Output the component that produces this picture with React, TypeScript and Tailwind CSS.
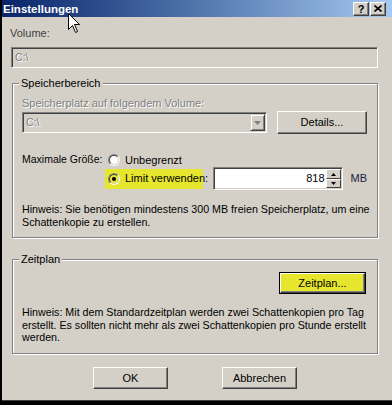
import React from "react";

const F = { fontFamily: '"Liberation Sans", Arial, sans-serif' };

function Btn({ children, w, h = 22, def = false, hl = false }: { children: React.ReactNode; w: number; h?: number; def?: boolean; hl?: boolean }) {
  const inner = (
    <div
      className={`flex items-center justify-center border border-t-white border-l-white border-r-[#404040] border-b-[#404040] shadow-[inset_-1px_-1px_0_#808080] text-[11px] text-black whitespace-nowrap ${hl ? "bg-[#e6e62e]" : "bg-[#d4d0c8]"}`}
      style={{ width: def ? w - 2 : w, height: def ? h - 2 : h }}
    >
      {children}
    </div>
  );
  if (def) return <div className="border border-black">{inner}</div>;
  return inner;
}

function Sunken({ className = "", children }: { className?: string; children?: React.ReactNode }) {
  return (
    <div className={`border border-t-[#808080] border-l-[#808080] border-b-white border-r-white shadow-[inset_1px_1px_0_#404040,inset_-1px_-1px_0_#d4d0c8] ${className}`}>
      {children}
    </div>
  );
}

function Group({ label, className = "", children }: { label: string; className?: string; children: React.ReactNode }) {
  return (
    <div className={`relative border border-[#808080] shadow-[inset_1px_1px_0_#fff,1px_1px_0_#fff] ${className}`}>
      <span className="absolute left-[6px] -top-[8px] px-[2px] bg-[#d4d0c8] leading-[14px] text-[11px] text-black">{label}</span>
      {children}
    </div>
  );
}

function Radio({ checked, fill = "#ffffff" }: { checked?: boolean; fill?: string }) {
  return (
    <div className="w-[12px] h-[12px] rounded-full border border-t-[#808080] border-l-[#808080] border-b-white border-r-white flex items-center justify-center shrink-0">
      <div
        className="w-[10px] h-[10px] rounded-full border border-t-[#404040] border-l-[#404040] border-b-[#d4d0c8] border-r-[#d4d0c8] flex items-center justify-center"
        style={{ background: fill }}
      >
        {checked && <div className="w-[4px] h-[4px] rounded-full bg-black" />}
      </div>
    </div>
  );
}

const disabledText = "text-[#808080] [text-shadow:1px_1px_0_#fff]";

export default function App() {
  return (
    <div className="w-[392px] h-[405px] bg-black overflow-hidden relative" style={F}>
      <div className="ml-[2px] w-[390px] h-[401px] bg-[#d4d0c8] border-b border-[#404040] flex flex-col">
        {/* Title bar */}
        <div className="h-[17px] bg-gradient-to-r from-[#0a246a] to-[#a6caf0] flex items-center justify-between pl-[1px] pr-[6px]">
          <span className="text-white font-bold text-[11.5px] leading-[14px]">Einstellungen</span>
          <div className="flex gap-[1px]">
            <div className="w-[16px] h-[14px] bg-[#d4d0c8] border border-t-white border-l-white border-r-[#404040] border-b-[#404040] shadow-[inset_-1px_-1px_0_#808080] flex items-center justify-center">
              <span className="font-bold text-[11px] leading-[10px] text-black">?</span>
            </div>
            <div className="w-[16px] h-[14px] bg-[#d4d0c8] border border-t-white border-l-white border-r-[#404040] border-b-[#404040] shadow-[inset_-1px_-1px_0_#808080] flex items-center justify-center">
              <svg width="8" height="7" viewBox="0 0 8 7">
                <path d="M0.5 0.5 L7.5 6.5 M7.5 0.5 L0.5 6.5" stroke="#000" strokeWidth="1.6" />
              </svg>
            </div>
          </div>
        </div>

        {/* Body */}
        <div className="flex flex-col pl-[9px] pr-[14px] text-[10.5px] text-black whitespace-nowrap">
          <div className="mt-[9px] leading-[14px] -ml-[1px] text-[#404040] text-[11px]">Volume:</div>
          <Sunken className="mt-[7px] h-[21px] w-[367px] bg-[#d4d0c8] flex items-center pl-[3px]">
            <span className={disabledText}>C:\</span>
          </Sunken>

          <Group label="Speicherbereich" className="mt-[15px] ml-[1px] h-[155px] pl-[9px] pr-[10px] pt-[12px]">
            <div className={`leading-[14px] text-[11px] ${disabledText}`}>Speicherplatz auf folgendem Volume:</div>
            <div className="mt-[1px] flex items-center">
              <Sunken className="h-[21px] w-[247px] bg-[#d4d0c8] flex items-center justify-between pl-[3px] pr-[1px]">
                <span className={disabledText}>C:\</span>
                <div className="w-[15px] h-[17px] bg-[#d4d0c8] border border-t-[#d4d0c8] border-l-[#d4d0c8] border-r-[#404040] border-b-[#404040] shadow-[inset_1px_1px_0_#fff,inset_-1px_-1px_0_#808080] flex items-center justify-center">
                  <svg width="7" height="4" viewBox="0 0 7 4"><path d="M0 0 H7 L3.5 4 Z" fill="#808080" /></svg>
                </div>
              </Sunken>
              <div className="ml-[10px]"><Btn w={90} h={23}>Details...</Btn></div>
            </div>

            <div className="mt-[19px] flex items-center h-[14px]">
              <span className="w-[86px] shrink-0">Maximale Größe:</span>
              <Radio />
              <span className="ml-[5px] text-[11px]">Unbegrenzt</span>
            </div>
            <div className="flex items-center h-[23px]">
              <div className="ml-[83px] w-[98px] h-[20px] bg-[#e6e62e] flex items-center pl-[3px]">
                <Radio checked fill="#e6e62e" />
                <span className="ml-[5px] text-[11px]">Limit verwenden:</span>
              </div>
              <Sunken className="ml-[10px] w-[132px] h-[23px] bg-white flex items-center justify-end pr-[1px]">
                <span className="mr-[1px] text-[11px]">818</span>
                <div className="flex flex-col w-[15px] h-[19px]">
                  <div className="h-[10px] bg-[#d4d0c8] border border-t-white border-l-white border-r-[#404040] border-b-[#404040] flex items-center justify-center">
                    <svg width="5" height="3" viewBox="0 0 5 3"><path d="M2.5 0 L5 3 H0 Z" fill="#000" /></svg>
                  </div>
                  <div className="h-[9px] bg-[#d4d0c8] border border-t-white border-l-white border-r-[#404040] border-b-[#404040] flex items-center justify-center">
                    <svg width="5" height="3" viewBox="0 0 5 3"><path d="M0 0 H5 L2.5 3 Z" fill="#000" /></svg>
                  </div>
                </div>
              </Sunken>
              <span className="ml-[8px] text-[#202040] text-[11px]">MB</span>
            </div>

            <div className="mt-[13px] leading-[13px] text-[10.7px]">
              Hinweis: Sie benötigen mindestens 300 MB freien Speicherplatz, um eine
              <br />
              Schattenkopie zu erstellen.
            </div>
          </Group>

          <Group label="Zeitplan" className="mt-[21px] ml-[1px] h-[95px] pl-[9px] pr-[11px] pt-[12px]">
            <div className="flex justify-end">
              <Btn w={87} h={22} def hl>Zeitplan...</Btn>
            </div>
            <div className="mt-[12px] leading-[12.5px] text-[10.7px]">
              Hinweis: Mit dem Standardzeitplan werden zwei Schattenkopien pro Tag
              <br />
              erstellt. Es sollten nicht mehr als zwei Schattenkopien pro Stunde erstellt
              <br />
              werden.
            </div>
          </Group>
        </div>

        <div className="mt-[13px] flex pl-[91px] gap-[54px]">
          <Btn w={75} h={22}>OK</Btn>
          <Btn w={75} h={22}>Abbrechen</Btn>
        </div>
      </div>

      {/* Mouse cursor */}
      <svg className="absolute left-[68px] top-[13px]" width="13" height="21" viewBox="0 0 13 21">
        <path d="M0.5 0.5 L0.5 16.5 L4.5 12.5 L7.5 19.5 L9.5 18.5 L6.5 11.5 L11.5 11.5 Z" fill="#fff" stroke="#000" strokeWidth="1" strokeLinejoin="miter" />
      </svg>
    </div>
  );
}
